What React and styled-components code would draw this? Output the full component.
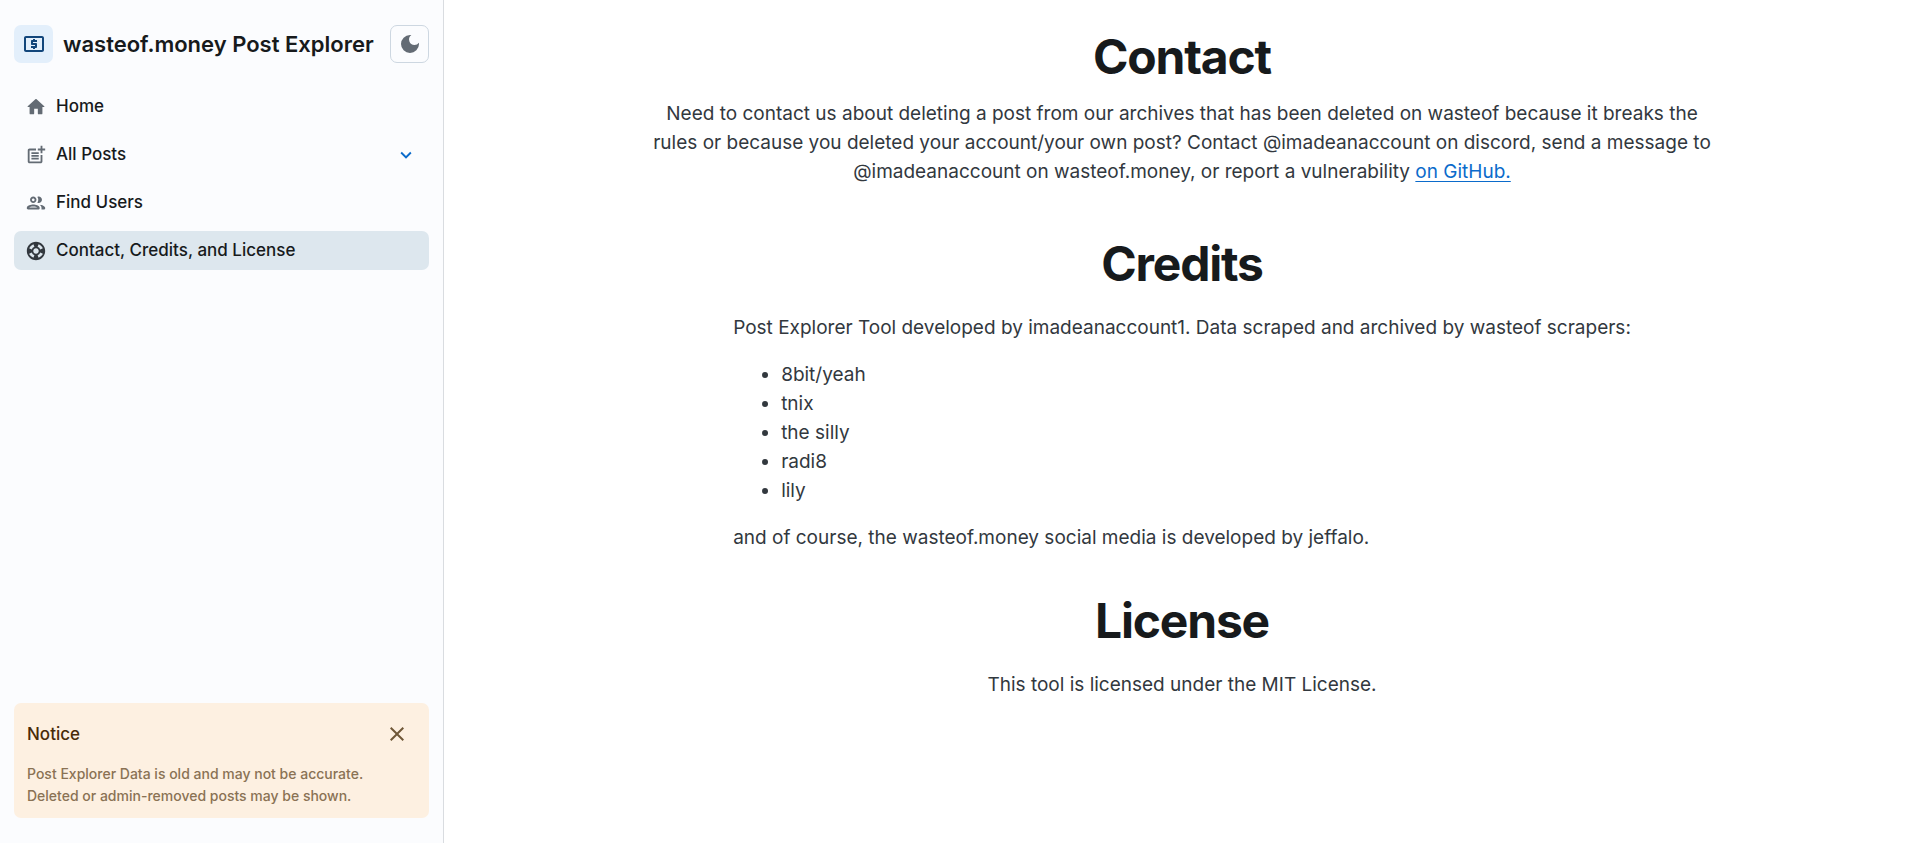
import React from "react";
import styled, { createGlobalStyle } from "styled-components";
import { MdOutlineLocalAtm, MdDarkMode, MdPostAdd, MdSupport, MdKeyboardArrowDown, MdClose } from "react-icons/md";

const GlobalStyle = createGlobalStyle`
  *, *::before, *::after { box-sizing: border-box; }
  body {
    margin: 0;
    background: #ffffff;
    color: #32383e;
    font-family: Inter, "Liberation Sans", sans-serif;
  }
  button { font: inherit; cursor: pointer; }
`;

const Page = styled.div`
  display: flex;
  min-height: 100vh;
`;

const Sidebar = styled.aside`
  flex: 0 0 444px;
  display: flex;
  flex-direction: column;
  padding: 25px 14px;
  background: #fbfcfe;
  border-right: 1px solid #d9dce0;
`;

const Header = styled.header`
  display: flex;
  align-items: center;
  gap: 10px;
`;

const Brand = styled.span`
  display: grid;
  place-items: center;
  width: 39px;
  height: 38px;
  border-radius: 7px;
  background: #e3effb;
  color: #12467b;
`;

const Title = styled.h2`
  flex: 1;
  margin: 0;
  color: #171a1c;
  font-size: 22px;
  font-weight: 600;
  line-height: 32px;
  white-space: nowrap;
`;

const ThemeButton = styled.button`
  display: grid;
  place-items: center;
  width: 39px;
  height: 38px;
  padding: 0;
  border: 1px solid #cdd7e1;
  border-radius: 7px;
  background: transparent;
  color: #636b74;
`;

const NavList = styled.ul`
  display: flex;
  flex-direction: column;
  gap: 9px;
  margin: 24px 0 0;
  padding: 0;
  list-style: none;
`;

const NavLink = styled.a`
  display: flex;
  align-items: center;
  gap: 9px;
  height: 39px;
  padding: 0 12px 0 11px;
  border-radius: 7px;
  background: ${(p) => (p.$active ? "#dde7ee" : "transparent")};
  color: #171a1c;
  font-size: 17px;
  font-weight: 500;
  line-height: 25px;
  text-decoration: none;

  svg:first-child { color: ${(p) => (p.$active ? "#32383e" : "#636b74")}; }
`;

const NavLabel = styled.span`
  flex: 1;
`;

const Chevron = styled(MdKeyboardArrowDown)`
  color: #0b6bcb;
  stroke: currentColor;
`;

const Notice = styled.section`
  margin-top: auto;
  padding: 12px 13px 11px;
  border-radius: 7px;
  background: #fdf0e1;
`;

const NoticeHeader = styled.div`
  display: flex;
  align-items: center;
  justify-content: space-between;
  height: 38px;
`;

const NoticeTitle = styled.h3`
  margin: 0;
  color: #492b08;
  font-size: 17px;
  font-weight: 500;
  line-height: 25px;
`;

const CloseButton = styled.button`
  display: grid;
  place-items: center;
  width: 38px;
  height: 38px;
  padding: 0;
  border: 0;
  background: transparent;
  color: #6f5737;
`;

const NoticeText = styled.p`
  margin: 10px 0 0;
  color: #8a7254;
  font-size: 14px;
  font-weight: 500;
  line-height: 22px;
`;

const Main = styled.main`
  flex: 1;
  min-width: 0;
  display: flex;
  flex-direction: column;
  align-items: center;
  padding: 25px 24px;
  font-size: 19px;
  line-height: 29px;
`;

const Heading = styled.h1`
  margin: ${(p) => p.$top || "0"} 0 0;
  color: #171a1c;
  font-size: 48px;
  font-weight: 700;
  line-height: 64px;
  letter-spacing: -0.025em;
  text-align: center;
`;

const Lead = styled.p`
  max-width: 1080px;
  margin: 10px 0 0;
  text-align: center;
`;

const Text = styled.p`
  margin: 17px 0;
`;

const TextLink = styled.a`
  color: #0b6bcb;
  text-decoration: underline;
  text-decoration-thickness: 1px;
  text-underline-offset: 3px;
  text-decoration-skip-ink: none;
`;

const People = styled.ul`
  margin: 18px 0;
  padding: 0 0 0 48px;
`;

const iconPaths = {
  home: "M10 19v-5h4v5c0 .55.45 1 1 1h3c.55 0 1-.45 1-1v-7h1.7c.46 0 .68-.57.33-.87L12.67 3.6c-.38-.34-.96-.34-1.34 0l-8.36 7.53c-.34.3-.13.87.33.87H5v7c0 .55.45 1 1 1h3c.55 0 1-.45 1-1z",
  people: "M9 13.75c-2.34 0-7 1.17-7 3.5V18c0 .55.45 1 1 1h12c.55 0 1-.45 1-1v-.75c0-2.33-4.66-3.5-7-3.5zM4.34 17c.84-.58 2.87-1.25 4.66-1.25s3.82.67 4.66 1.25H4.34zM9 12c1.93 0 3.5-1.57 3.5-3.5S10.93 5 9 5 5.5 6.57 5.5 8.5 7.07 12 9 12zm0-5c.83 0 1.5.67 1.5 1.5S9.83 10 9 10s-1.5-.67-1.5-1.5S8.17 7 9 7zm7.04 6.81c1.16.84 1.96 1.96 1.96 3.44V19h3c.55 0 1-.45 1-1v-.75c0-2.02-3.5-3.17-5.96-3.44zM15 12c1.93 0 3.5-1.57 3.5-3.5S16.93 5 15 5c-.54 0-1.04.13-1.5.35.63.89 1 1.98 1 3.15s-.37 2.26-1 3.15c.46.22.96.35 1.5.35z",
};

function RoundedIcon({ path, size }) {
  return (
    <svg width={size} height={size} viewBox="0 0 24 24" fill="currentColor" aria-hidden="true">
      <path d={path} />
    </svg>
  );
}

const HomeIcon = (props) => <RoundedIcon path={iconPaths.home} {...props} />;
const PeopleIcon = (props) => <RoundedIcon path={iconPaths.people} {...props} />;

const navItems = [
  { label: "Home", icon: HomeIcon },
  { label: "All Posts", icon: MdPostAdd, expandable: true },
  { label: "Find Users", icon: PeopleIcon },
  { label: "Contact, Credits, and License", icon: MdSupport, active: true },
];

const scrapers = ["8bit/yeah", "tnix", "the silly", "radi8", "lily"];

export default function App() {
  return (
    <Page>
      <GlobalStyle />
      <Sidebar>
        <Header>
          <Brand><MdOutlineLocalAtm size={24} /></Brand>
          <Title>wasteof.money Post Explorer</Title>
          <ThemeButton type="button" aria-label="Toggle dark mode"><MdDarkMode size={24} /></ThemeButton>
        </Header>
        <nav>
          <NavList>
            {navItems.map(({ label, icon: Icon, expandable, active }) => (
              <li key={label}>
                <NavLink href="#" $active={active} aria-current={active ? "page" : undefined}>
                  <Icon size={22} />
                  <NavLabel>{label}</NavLabel>
                  {expandable && <Chevron size={22} />}
                </NavLink>
              </li>
            ))}
          </NavList>
        </nav>
        <Notice>
          <NoticeHeader>
            <NoticeTitle>Notice</NoticeTitle>
            <CloseButton type="button" aria-label="Dismiss notice"><MdClose size={24} /></CloseButton>
          </NoticeHeader>
          <NoticeText>
            Post Explorer Data is old and may not be accurate. Deleted or admin-removed posts may be shown.
          </NoticeText>
        </Notice>
      </Sidebar>
      <Main>
        <Heading>Contact</Heading>
        <Lead>
          Need to contact us about deleting a post from our archives that has been deleted on wasteof because it breaks the rules or because you deleted your account/your own post? Contact @imadeanaccount on discord, send a message to @imadeanaccount on wasteof.money, or report a vulnerability <TextLink href="#">on GitHub.</TextLink>
        </Lead>
        <Heading $top="46px">Credits</Heading>
        <div>
          <Text>Post Explorer Tool developed by imadeanaccount1. Data scraped and archived by wasteof scrapers:</Text>
          <People>
            {scrapers.map((name) => <li key={name}>{name}</li>)}
          </People>
          <Text>and of course, the wasteof.money social media is developed by jeffalo.</Text>
        </div>
        <Heading $top="20px">License</Heading>
        <Text>This tool is licensed under the MIT License.</Text>
      </Main>
    </Page>
  );
}
